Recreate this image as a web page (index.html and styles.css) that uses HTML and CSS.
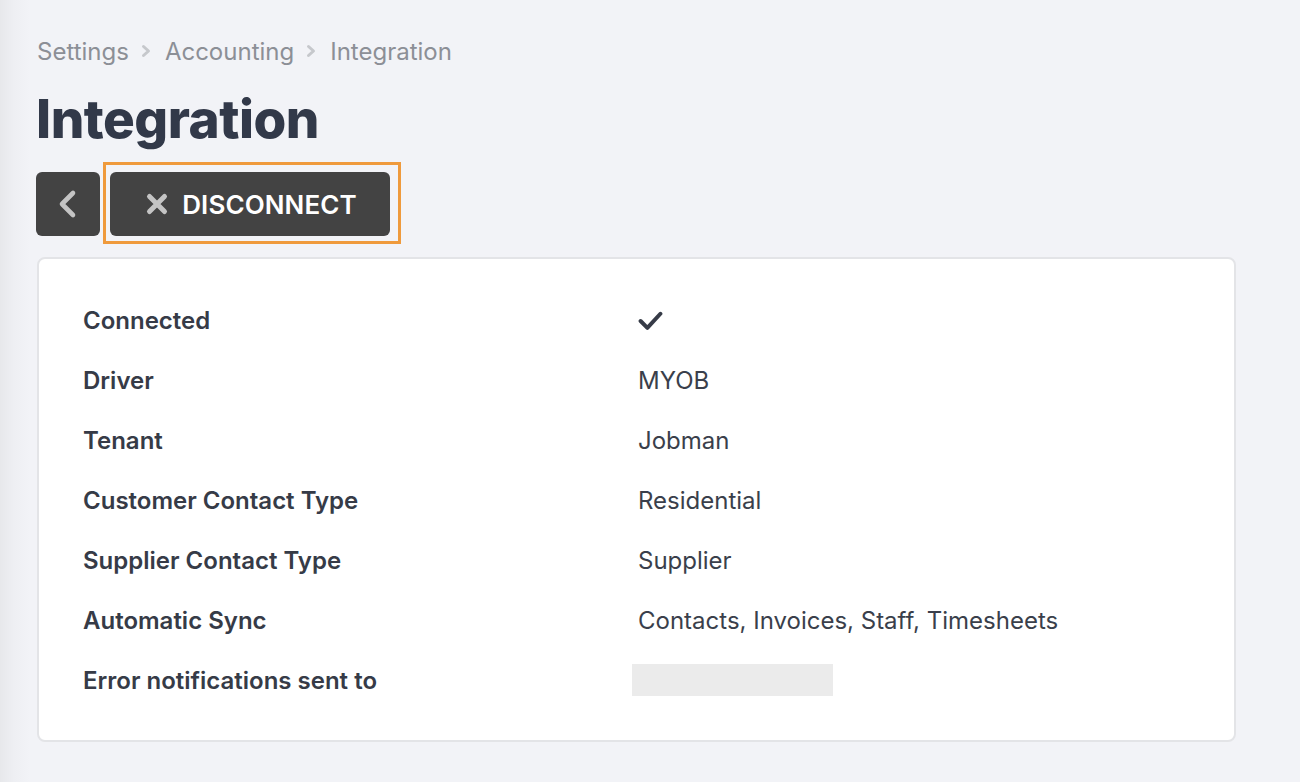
FILE: index.html
```html
<!DOCTYPE html>
<html lang="en">
<head>
<meta charset="utf-8">
<title>Integration</title>
<link rel="stylesheet" href="styles.css">
</head>
<body>
<div class="page">
  <nav class="breadcrumb">
    <span>Settings</span>
    <svg class="crumb-sep" viewBox="0 0 12 14" width="12" height="14"><path d="M3.5 2.5 L8.5 7 L3.5 11.5" fill="none" stroke="currentColor" stroke-width="3" stroke-linecap="round" stroke-linejoin="round"/></svg>
    <span>Accounting</span>
    <svg class="crumb-sep" viewBox="0 0 12 14" width="12" height="14"><path d="M3.5 2.5 L8.5 7 L3.5 11.5" fill="none" stroke="currentColor" stroke-width="3" stroke-linecap="round" stroke-linejoin="round"/></svg>
    <span>Integration</span>
  </nav>
  <h1 class="title">Integration</h1>
  <div class="toolbar">
    <button class="btn btn-back" type="button" aria-label="Back">
      <svg viewBox="0 0 22 30" width="22" height="30"><path d="M16 4 L5 15 L16 26" fill="none" stroke="#c4c4c4" stroke-width="4.6" stroke-linecap="round" stroke-linejoin="round"/></svg>
    </button>
    <div class="focus-wrap">
      <button class="btn btn-disconnect" type="button">
        <svg viewBox="0 0 24 24" width="24" height="24"><path d="M4.5 4.5 L19.5 19.5 M19.5 4.5 L4.5 19.5" fill="none" stroke="#c4c4c4" stroke-width="5" stroke-linecap="round"/></svg>
        <span>DISCONNECT</span>
      </button>
      <div class="focus-ring"></div>
    </div>
  </div>
  <section class="card">
    <div class="row"><div class="label">Connected</div><div class="value"><svg class="check" viewBox="0 0 24 20" width="25" height="21"><path d="M2.5 10.5 L9 17 L21.5 3.5" fill="none" stroke="#363b47" stroke-width="3.8" stroke-linecap="round" stroke-linejoin="round"/></svg></div></div>
    <div class="row"><div class="label">Driver</div><div class="value">MYOB</div></div>
    <div class="row"><div class="label">Tenant</div><div class="value">Jobman</div></div>
    <div class="row"><div class="label">Customer Contact Type</div><div class="value">Residential</div></div>
    <div class="row"><div class="label">Supplier Contact Type</div><div class="value">Supplier</div></div>
    <div class="row"><div class="label">Automatic Sync</div><div class="value">Contacts, Invoices, Staff, Timesheets</div></div>
    <div class="row"><div class="label">Error notifications sent to</div><div class="value"><div class="redacted"></div></div></div>
  </section>
</div>
</body>
</html>
```
FILE: styles.css
```css
html, body {
  margin: 0;
  padding: 0;
}
body {
  width: 1300px;
  height: 782px;
  overflow: hidden;
  font-family: Inter, "Noto Sans", sans-serif;
  background: linear-gradient(to right, #e7e8eb 0px, #eeeff3 14px, #f2f3f7 30px, #f2f3f7 100%);
  color: #363b47;
}
.page {
  padding: 36px 0 0 37px;
}
.breadcrumb {
  display: flex;
  align-items: center;
  gap: 11px;
  font-size: 24px;
  color: #8c8f96;
  height: 30px;
}
.crumb-sep {
  color: #c6c8cc;
  margin: 0 2px 0 0;
}
.title {
  margin: 18px 0 0 -1px;
  font-size: 53px;
  font-weight: 800;
  line-height: 70px;
  color: #323949;
  letter-spacing: -0.5px;
}
.toolbar {
  display: flex;
  align-items: flex-start;
  gap: 10px;
  margin-top: 18px;
  margin-left: -1px;
}
.btn {
  display: flex;
  align-items: center;
  justify-content: center;
  height: 64px;
  border: none;
  border-radius: 6px;
  background: #434343;
  color: #ffffff;
  font-family: Inter, "Noto Sans", sans-serif;
  cursor: pointer;
}
.btn-back {
  width: 64px;
  padding: 0 1px 0 0;
}
.focus-wrap {
  position: relative;
}
.btn-disconnect {
  width: 280px;
  gap: 13px;
  padding: 0 0 0 2px;
  font-size: 26px;
  font-weight: 600;
  letter-spacing: 0.1px;
}
.focus-ring {
  position: absolute;
  left: -7px;
  top: -10px;
  right: -11px;
  bottom: -8px;
  border: 3px solid #ef9a3c;
  pointer-events: none;
}
.card {
  margin-top: 21px;
  width: 1199px;
  box-sizing: border-box;
  background: #ffffff;
  border: 2px solid #e3e4e7;
  border-radius: 8px;
  padding: 31px 0 30px 44px;
}
.row {
  display: flex;
  align-items: center;
  height: 60px;
  font-size: 24px;
}
.label {
  width: 555px;
  font-weight: 600;
  color: #363b47;
}
.value {
  color: #3a3f4b;
  display: flex;
  align-items: center;
}
.check {
  display: block;
}
.redacted {
  width: 201px;
  height: 32px;
  background: #ebebeb;
  margin-left: -6px;
}
```
